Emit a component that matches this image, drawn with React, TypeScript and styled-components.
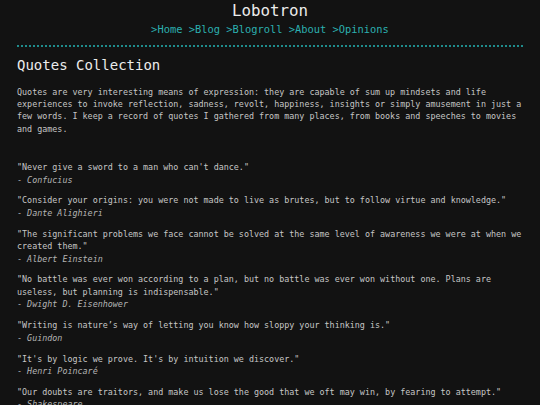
import styled, { createGlobalStyle } from "styled-components";

const GlobalStyle = createGlobalStyle`
  html, body {
    margin: 0;
    padding: 0;
    background: #121212;
  }
  body {
    font-family: "DejaVu Sans Mono", "Liberation Mono", monospace;
    color: #c6c6c6;
  }
`;

const Page = styled.div`
  display: flex;
  flex-direction: column;
  padding: 0 17px;
`;

const Header = styled.header`
  display: flex;
  flex-direction: column;
  align-items: center;
  padding-top: 1px;
`;

const SiteTitle = styled.h1`
  margin: 0;
  font-size: 15.8px;
  font-weight: normal;
  line-height: 19px;
  color: #ececec;
`;

const Nav = styled.nav`
  display: flex;
  gap: 6.25px;
  font-size: 10.4px;
  line-height: 18px;
`;

const NavLink = styled.a`
  color: #2cb0b0;
  text-decoration: none;
  &::before {
    content: ">";
  }
`;

const Divider = styled.hr`
  margin: 7px 0 0;
  border: none;
  border-top: 2px dotted #1f8c8c;
  height: 0;
`;

const Heading = styled.h2`
  margin: 8px 0 0;
  font-size: 14px;
  font-weight: normal;
  line-height: 20px;
  color: #ececec;
`;

const Intro = styled.p`
  margin: 10.5px 0 0;
  font-size: 8.4px;
  line-height: 12.4px;
`;

const QuoteList = styled.div`
  display: flex;
  flex-direction: column;
  gap: 8.5px;
  margin-top: 26px;
`;

const Quote = styled.blockquote`
  margin: 0;
  font-size: 8.4px;
  line-height: 12.4px;
`;

const QuoteText = styled.p`
  margin: 0;
`;

const Author = styled.cite`
  display: block;
  font-style: italic;
  color: #b4b4b4;
  &::before {
    content: "- ";
    font-style: normal;
  }
`;

const links = ["Home", "Blog", "Blogroll", "About", "Opinions"];

const quotes = [
  { text: "Never give a sword to a man who can't dance.", author: "Confucius" },
  {
    text: "Consider your origins: you were not made to live as brutes, but to follow virtue and knowledge.",
    author: "Dante Alighieri",
  },
  {
    text: "The significant problems we face cannot be solved at the same level of awareness we were at when we created them.",
    author: "Albert Einstein",
  },
  {
    text: "No battle was ever won according to a plan, but no battle was ever won without one. Plans are useless, but planning is indispensable.",
    author: "Dwight D. Eisenhower",
  },
  {
    text: "Writing is nature’s way of letting you know how sloppy your thinking is.",
    author: "Guindon",
  },
  { text: "It's by logic we prove. It's by intuition we discover.", author: "Henri Poincaré" },
  {
    text: "Our doubts are traitors, and make us lose the good that we oft may win, by fearing to attempt.",
    author: "Shakespeare",
  },
];

const App: React.FC = () => (
  <>
    <GlobalStyle />
    <Page>
      <Header>
        <SiteTitle>Lobotron</SiteTitle>
        <Nav>
          {links.map((l) => (
            <NavLink key={l} href="#">
              {l}
            </NavLink>
          ))}
        </Nav>
      </Header>
      <Divider />
      <Heading>Quotes Collection</Heading>
      <Intro>
        Quotes are very interesting means of expression: they are capable of sum up mindsets and
        life experiences to invoke reflection, sadness, revolt, happiness, insights or simply
        amusement in just a few words. I keep a record of quotes I gathered from many places, from
        books and speeches to movies and games.
      </Intro>
      <QuoteList>
        {quotes.map((q) => (
          <Quote key={q.author}>
            <QuoteText>"{q.text}"</QuoteText>
            <Author>{q.author}</Author>
          </Quote>
        ))}
      </QuoteList>
    </Page>
  </>
);

export default App;
